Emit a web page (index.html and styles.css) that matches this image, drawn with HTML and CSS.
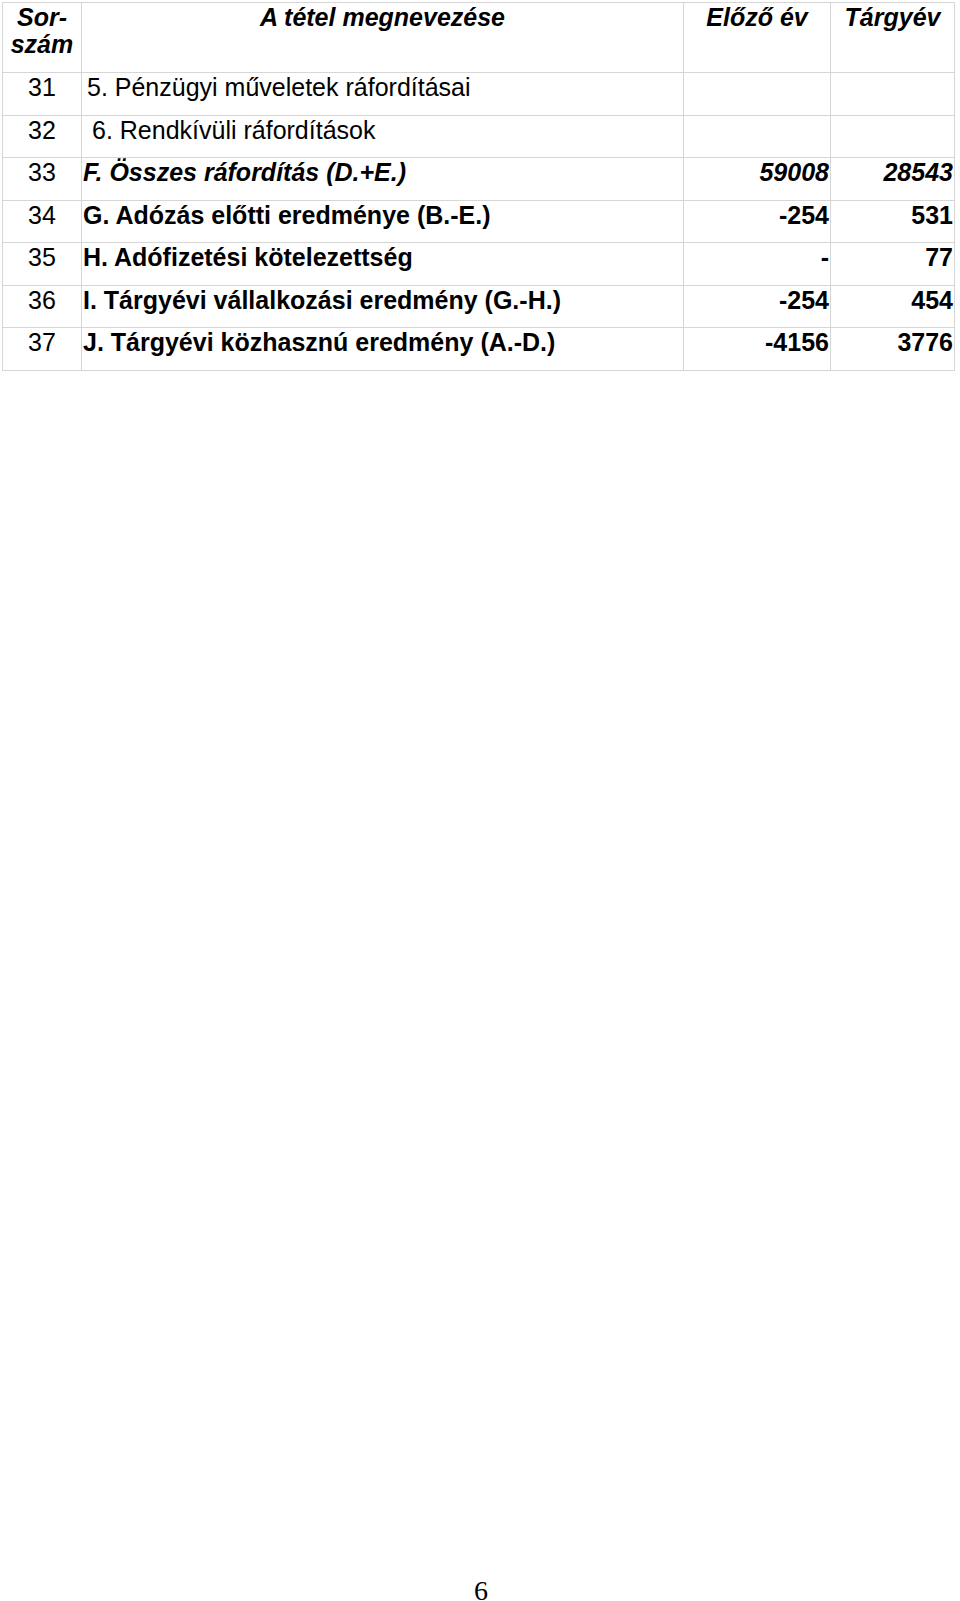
FILE: index.html
```html
<!DOCTYPE html>
<html lang="hu">
<head>
<meta charset="utf-8">
<title>Eredménykimutatás</title>
<link rel="stylesheet" href="styles.css">
</head>
<body>
<table class="report">
  <colgroup>
    <col class="c-no">
    <col class="c-name">
    <col class="c-prev">
    <col class="c-cur">
  </colgroup>
  <thead>
    <tr class="head">
      <th>Sor-<br>szám</th>
      <th>A tétel megnevezése</th>
      <th>Előző év</th>
      <th>Tárgyév</th>
    </tr>
  </thead>
  <tbody>
    <tr class="plain">
      <td class="no">31</td>
      <td class="name ind1">5. Pénzügyi műveletek ráfordításai</td>
      <td class="num"></td>
      <td class="num"></td>
    </tr>
    <tr class="plain">
      <td class="no">32</td>
      <td class="name ind2">6. Rendkívüli ráfordítások</td>
      <td class="num"></td>
      <td class="num"></td>
    </tr>
    <tr class="bold-italic">
      <td class="no">33</td>
      <td class="name">F. Összes ráfordítás (D.+E.)</td>
      <td class="num">59008</td>
      <td class="num">28543</td>
    </tr>
    <tr class="bold">
      <td class="no">34</td>
      <td class="name">G. Adózás előtti eredménye (B.-E.)</td>
      <td class="num">-254</td>
      <td class="num">531</td>
    </tr>
    <tr class="bold">
      <td class="no">35</td>
      <td class="name">H. Adófizetési kötelezettség</td>
      <td class="num">-</td>
      <td class="num">77</td>
    </tr>
    <tr class="bold">
      <td class="no">36</td>
      <td class="name">I. Tárgyévi vállalkozási eredmény (G.-H.)</td>
      <td class="num">-254</td>
      <td class="num">454</td>
    </tr>
    <tr class="bold">
      <td class="no">37</td>
      <td class="name">J. Tárgyévi közhasznú eredmény (A.-D.)</td>
      <td class="num">-4156</td>
      <td class="num">3776</td>
    </tr>
  </tbody>
</table>
<div class="page-no">6</div>
</body>
</html>
```

FILE: styles.css
```css
html, body {
  margin: 0;
  padding: 0;
  height: 1601px;
  overflow: hidden;
  background: #ffffff;
}

body {
  padding: 2px 0 0 2px;
  box-sizing: border-box;
  font-family: "Liberation Sans", Arial, sans-serif;
  color: #000000;
}

.report {
  border-collapse: collapse;
  table-layout: fixed;
  width: 952px;
  font-size: 25px;
  line-height: 28px;
}

.c-no { width: 79px; }
.c-name { width: 602px; }
.c-prev { width: 147px; }
.c-cur { width: 124px; }

.report th,
.report td {
  border: 1px solid #d6d6d6;
  padding: 0 1px;
  vertical-align: top;
  white-space: nowrap;
  overflow: hidden;
}

.report .head th {
  height: 68px;
  padding-top: 1px;
  line-height: 27px;
  font-weight: bold;
  font-style: italic;
  text-align: center;
}

.report tbody td {
  height: 41.5px;
}

.no {
  text-align: center;
}

.name {
  text-align: left;
}

.report td.ind1 { padding-left: 5px; }
.report td.ind2 { padding-left: 10px; }

.num {
  text-align: right;
}

.report td.num {
  padding-right: 1px;
}

.bold td {
  font-weight: bold;
}

.bold td.no,
.bold-italic td.no {
  font-weight: normal;
  font-style: normal;
}

.bold-italic td {
  font-weight: bold;
  font-style: italic;
}

.page-no {
  margin-top: 1210px;
  text-align: center;
  font-family: "Liberation Serif", "Times New Roman", serif;
  font-size: 28px;
  line-height: 20px;
}
```
